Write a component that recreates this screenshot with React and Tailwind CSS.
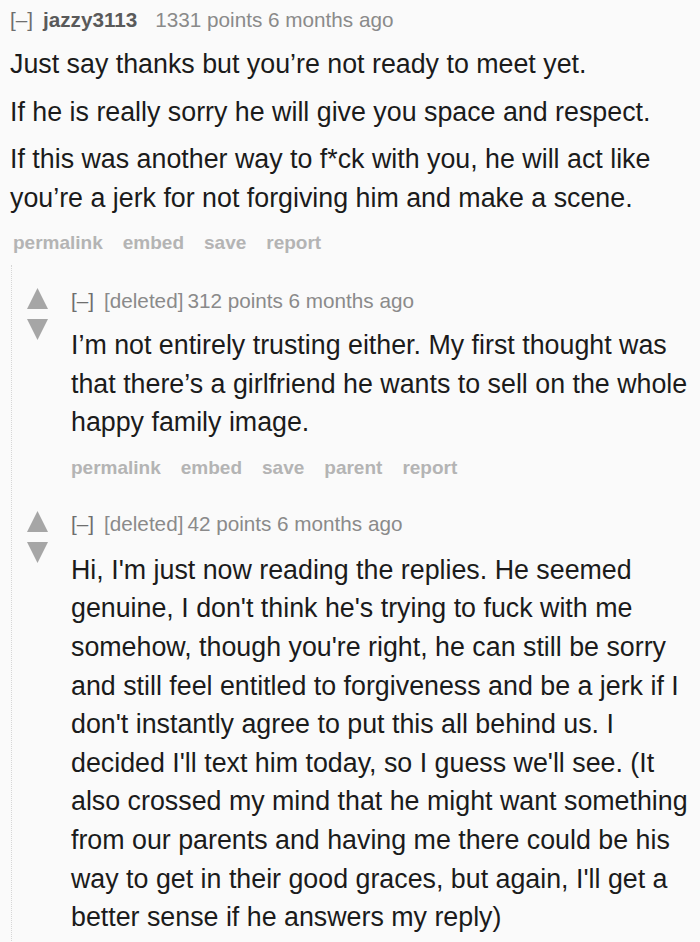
const thread = {
  author: "jazzy3113",
  points: "1331 points 6 months ago",
  paragraphs: [
    ["Just say thanks but you’re not ready to meet yet."],
    ["If he is really sorry he will give you space and respect."],
    [
      "If this was another way to f*ck with you, he will act like",
      "you’re a jerk for not forgiving him and make a scene.",
    ],
  ],
  replies: [
    {
      points: "312 points 6 months ago",
      lines: [
        "I’m not entirely trusting either. My first thought was",
        "that there’s a girlfriend he wants to sell on the whole",
        "happy family image.",
      ],
      buttons: ["permalink", "embed", "save", "parent", "report"],
    },
    {
      points: "42 points 6 months ago",
      lines: [
        "Hi, I'm just now reading the replies. He seemed",
        "genuine, I don't think he's trying to fuck with me",
        "somehow, though you're right, he can still be sorry",
        "and still feel entitled to forgiveness and be a jerk if I",
        "don't instantly agree to put this all behind us. I",
        "decided I'll text him today, so I guess we'll see. (It",
        "also crossed my mind that he might want something",
        "from our parents and having me there could be his",
        "way to get in their good graces, but again, I'll get a",
        "better sense if he answers my reply)",
      ],
      buttons: null,
    },
  ],
};

function Arrow({ down }) {
  return (
    <svg width="21" height="21" viewBox="0 0 21 21" className="block">
      <polygon points={down ? "0,0 21,0 10.5,21" : "10.5,0 21,21 0,21"} fill="#a6a6a6" />
    </svg>
  );
}

function Buttons({ items, className }) {
  return (
    <div className={`flex gap-[20px] text-[19px] leading-[24px] font-bold text-[#b4b4b4] ${className}`}>
      {items.map((b) => (
        <span key={b}>{b}</span>
      ))}
    </div>
  );
}

function Reply({ reply, className = "", bodyGap = "mt-[10px]" }) {
  return (
    <div className={`flex gap-[23px] ${className}`}>
      <div className="flex flex-col gap-[10px] mt-[1px] w-[21px] shrink-0">
        <Arrow />
        <Arrow down />
      </div>
      <div>
        <div className="text-[20.7px] leading-[28px] whitespace-nowrap">
          <span className="text-[#6e6e6e]">[–]</span>
          <span className="ml-[10px] text-[#8a8a8a]">[deleted]</span>
          <span className="ml-[4px] text-[#8a8a8a]">{reply.points}</span>
        </div>
        <div className={`${bodyGap} text-[26.8px] leading-[38.6px] text-[#1b1b1b]`}>
          {reply.lines.map((l) => (
            <div key={l} className="whitespace-nowrap">{l}</div>
          ))}
        </div>
        {reply.buttons && <Buttons items={reply.buttons} className="mt-[14px]" />}
      </div>
    </div>
  );
}

export default function App() {
  return (
    <div className="min-h-screen bg-[#fafafa] font-['Liberation_Sans',Arial,sans-serif]">
      <div className="pl-[10px] pt-[6px]">
        <div className="text-[20.7px] leading-[28px] whitespace-nowrap">
          <span className="text-[#6e6e6e]">[–]</span>
          <span className="ml-[10px] font-bold text-[#5a5a5a]">{thread.author}</span>
          <span className="ml-[18px] text-[#8a8a8a]">{thread.points}</span>
        </div>
        <div className="mt-[11px] text-[26.8px] leading-[39px] text-[#1b1b1b] space-y-[8.5px]">
          {thread.paragraphs.map((p, i) => (
            <div key={i}>
              {p.map((l) => (
                <div key={l} className="whitespace-nowrap">{l}</div>
              ))}
            </div>
          ))}
        </div>
        <Buttons items={["permalink", "embed", "save", "report"]} className="mt-[13px] pl-[3px]" />

        <div className="ml-[1px] mt-[10px] border-l border-dotted border-[#d6d6d6] pt-[22px] pl-[15px] pb-[10px]">
          <Reply reply={thread.replies[0]} bodyGap="mt-[11px]" />
          <Reply reply={thread.replies[1]} className="mt-[30px]" bodyGap="mt-[13px]" />
        </div>
      </div>
    </div>
  );
}
